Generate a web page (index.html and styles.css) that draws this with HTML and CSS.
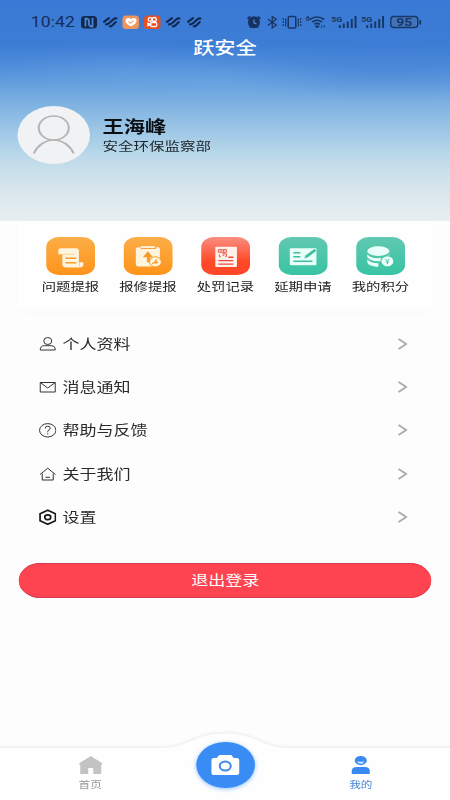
FILE: index.html
```html
<!DOCTYPE html>
<html lang="zh-CN">
<head>
<meta charset="utf-8">
<title>跃安全</title>
<link rel="stylesheet" href="styles.css">
</head>
<body>
<div class="screen">
  <header class="hero">
    <div class="status">
      <span class="time">10:42</span>
      <svg class="status-left" viewBox="80 12 122 20" preserveAspectRatio="none">
        <rect x="81" y="16" width="16" height="12.5" rx="3.5" fill="#12294f"/>
        <path d="M85.5 26.500V18.500q3 0 3.500 2v4q.5 2 3.500 2V18" fill="none" stroke="#4a86d4" stroke-width="1.800"/>
        <g id="swoosh" fill="none" stroke="#10284f" stroke-width="2.100" stroke-linecap="round">
          <path d="M104 21.800l5-3.600"/><path d="M106 24.300q1.500.200 3-1l4.500-4q1.500-1.300 3-.8"/><path d="M109.800 26.300q1.500.200 2.700-1l3.300-3.200"/>
        </g>
        <rect x="122.500" y="15.500" width="16.500" height="13.500" rx="3.500" fill="#f0965a"/>
        <path d="M131 26.500c-4-2-6-4-5.500-6.300.5-2.500 4-3 5.500-.8 1.500-2.200 5-1.700 5.500.8.5 2.300-1.500 4.300-5.500 6.300z" fill="#fff"/>
        <path d="M128.500 21.500l2 1.700 3-2.500" fill="none" stroke="#f0a070" stroke-width="1.100"/>
        <rect x="144" y="15.500" width="16.500" height="13.500" rx="3.500" fill="#e84f20"/>
        <g fill="none" stroke="#fff" stroke-width="1.300"><circle cx="150" cy="19.500" r="1.800"/><circle cx="154.300" cy="19.500" r="2"/><rect x="150.500" y="22.500" width="6.300" height="4" rx="1.500"/><path d="M148 23.300v2.400l2.500-1.200z"/></g>
        <use href="#swoosh" x="63"/><use href="#swoosh" x="84"/>
      </svg>
      <svg class="status-right" viewBox="246 12 176 20" preserveAspectRatio="none">
        <g fill="none" stroke="#183767" stroke-width="1.500">
          <circle cx="253.700" cy="22.300" r="5.300" fill="#14305c"/>
          <path d="M247.500 19l2.500-2.500M260 19l-2.500-2.500M249.500 27.500l1.500-1.500M258 27.500l-1.500-1.500" stroke-width="2"/>
          <path d="M253.700 19.500v3.300l2.500 1.200" stroke="#5b92da" stroke-width="1.200"/>
          <path d="M267.500 19l8.500 6-4 3V16.500l4 2.800-8.500 6.200" stroke-width="1.300"/>
          <rect x="288" y="16.500" width="7.500" height="11.500" rx="1"/>
          <path d="M285.500 18.500v8M298 18.500v8M283 18v2m0 1v2m0 1v2M300.500 18v2m0 1v2m0 1v2" stroke-width="1.200"/>
          <path d="M309.500 19.500q7-5 14.500 0M312 22q4.700-3.500 9.700 0M314.300 24.300q2.500-1.800 5.200 0" stroke-width="1.700"/>
          <path d="M315 26h4l-2 2zM321.500 25.500v2.500M324 25v2.500" fill="#183767" stroke-width="1"/>
          <path id="bars" d="M339.500 25v3M343.500 23.500v4.500M347.500 21.500v6.500M351.500 19v9M355.300 16v12" stroke-width="2"/>
          <use href="#bars" x="27.500"/>
          <rect x="390.500" y="16.500" width="27" height="11" rx="3" fill="#4174ba" stroke-width="1.400"/>
          <path d="M420 20v4.500" stroke-width="1.800"/>
        </g>
        <g class="status-text">
          <text x="305.500" y="21" font-size="7">6</text>
          <text x="331" y="21.800" font-size="7.500" textLength="11" lengthAdjust="spacingAndGlyphs">5G</text>
          <text x="361" y="21.800" font-size="7.500" textLength="11" lengthAdjust="spacingAndGlyphs">5G</text>
          <text x="396" y="26" font-size="11" textLength="16" lengthAdjust="spacingAndGlyphs">95</text>
        </g>
      </svg>
    </div>
    <h1 class="title">跃安全</h1>
    <div class="profile">
      <div class="avatar">
        <svg viewBox="0 0 58 58"><circle cx="29" cy="22" r="12"/><path d="M13 47.500c3-8 9-13.500 16-13.500s13 5.500 16 13.500"/></svg>
      </div>
      <div class="who"><div class="name">王海峰</div><div class="dept">安全环保监察部</div></div>
    </div>
  </header>

  <nav class="shortcuts">
    <a class="shortcut"><span class="tile orange">
      <svg viewBox="0 0 48 38" preserveAspectRatio="none"><path d="M14 11h16q2.500 0 2.500 3v11h4.500v2q0 3-3 3H19q-3 0-3-3V17h-4v-3q0-3 2-3z" fill="#fff4dd"/><path d="M16 17h12M33 29v-4" stroke="#ffd08a" fill="none"/><path d="M19 21h11M19 25.500h11" stroke="#fb9c2c" stroke-width="1.500"/></svg>
    </span><span class="label">问题提报</span></a>
    <a class="shortcut"><span class="tile orange">
      <svg viewBox="0 0 48 38" preserveAspectRatio="none"><rect x="12" y="10" width="24" height="19" rx="2" fill="#fff4dd"/><path d="M17 10.500h15" stroke="#fba037" stroke-width="2.500"/><rect x="17" y="9" width="14" height="1.800" fill="#fff4dd"/><path d="M24 14l5 6h-3v5h-3v-5h-4z" fill="#fb9a28"/><ellipse cx="31.500" cy="24.500" rx="6" ry="5" fill="#fff4dd" stroke="#fba033"/><path d="M28 26l3-2q0-2.500 2-2l-.5 2 2 1-2 1.500-2-.5-2 1z" fill="#fb9a28"/></svg>
    </span><span class="label">报修提报</span></a>
    <a class="shortcut"><span class="tile red">
      <svg viewBox="0 0 48 38" preserveAspectRatio="none"><rect x="14" y="9.500" width="21.500" height="20" rx="1" fill="#fff2ed"/><path d="M17 12.500h8v2.500h-8zM19.700 12.500v2.500M22.300 12.500v2.500M18 17v2.500h1.500M21 16.500h4v3h-1M21 18h2" fill="none" stroke="#e84a3b" stroke-width=".9"/><path d="M27 20h5M17 23.300h15M17 26.800h15" stroke="#ed4b38" stroke-width="1.300"/></svg>
    </span><span class="label">处罚记录</span></a>
    <a class="shortcut"><span class="tile green">
      <svg viewBox="0 0 48 38" preserveAspectRatio="none"><rect x="11" y="11" width="26.500" height="17" rx="1" fill="#eafff8"/><path d="M14.500 15.500h7M14.500 19.500h7M14.500 24h19" stroke="#3ebea3" stroke-width="1.400"/><path d="M25 21.500l1.500-3.500 9-6.500 2.500 2-9 6.700z" fill="#3ebea3" stroke="#eafff8" stroke-width=".5"/></svg>
    </span><span class="label">延期申请</span></a>
    <a class="shortcut"><span class="tile green">
      <svg viewBox="0 0 48 38" preserveAspectRatio="none"><g fill="#eafff8"><ellipse cx="22" cy="14" rx="11" ry="4.800"/><path d="M11 17q3 4 11 4t11-4v3q-3 4-11 4t-11-4zM11 22q3 4 11 4v3.500q-11-.5-11-5z"/><ellipse cx="31" cy="24" rx="6.500" ry="5.500" stroke="#43c4a9"/></g><path d="M29 21.500l2 2.300 2-2.300M31 23.800v3M29.500 24.800h3" fill="none" stroke="#3ebea3" stroke-width=".9"/></svg>
    </span><span class="label">我的积分</span></a>
  </nav>

  <ul class="menu">
    <li><svg class="ico" viewBox="0 0 18 16" preserveAspectRatio="none"><ellipse cx="9" cy="5" rx="4" ry="3.500"/><path d="M1.500 14q0-4.300 4-4.300h7q4 0 4 4.300z"/></svg><span>个人资料</span><svg class="chev" viewBox="0 0 8 12"><path d="M.8.800L7 6 .8 11.200"/></svg></li>
    <li><svg class="ico" viewBox="0 0 18 16" preserveAspectRatio="none"><path d="M1.500 3.500h15v9.500h-15zM1.500 3.500L9 9l7.500-5.500"/></svg><span>消息通知</span><svg class="chev" viewBox="0 0 8 12"><path d="M.8.800L7 6 .8 11.200"/></svg></li>
    <li><svg class="ico" viewBox="0 0 18 16" preserveAspectRatio="none"><ellipse cx="9" cy="8.300" rx="8.200" ry="6.700"/><path d="M6.500 6.500q0-2.300 2.500-2.300t2.500 2q0 1.200-1.300 1.800T9 9.500v.8M9 11.300v1.200"/></svg><span>帮助与反馈</span><svg class="chev" viewBox="0 0 8 12"><path d="M.8.800L7 6 .8 11.200"/></svg></li>
    <li><svg class="ico" viewBox="0 0 18 16" preserveAspectRatio="none"><path d="M1.300 8.500L9 2.200l7.700 6.300M3.500 7.500V14h11V7.500M6.800 11.300h4.400"/></svg><span>关于我们</span><svg class="chev" viewBox="0 0 8 12"><path d="M.8.800L7 6 .8 11.200"/></svg></li>
    <li><svg class="ico bold" viewBox="0 0 18 16" preserveAspectRatio="none"><path d="M9 1.300l7.700 3.500v7L9 15.300 1.300 11.800v-7z"/><ellipse cx="9" cy="8.300" rx="3" ry="2.400"/></svg><span>设置</span><svg class="chev" viewBox="0 0 8 12"><path d="M.8.800L7 6 .8 11.200"/></svg></li>
  </ul>

  <button class="logout">退出登录</button>

  <footer class="tabbar">
    <svg class="bar-shape" viewBox="0 0 450 72" preserveAspectRatio="none"><path d="M-4 20H160C190 20 192 5.500 225 5.500S260 20 290 20H454V76H-4Z"/></svg>
    <div class="tabs">
      <a class="tab"><svg viewBox="0 0 24 18" preserveAspectRatio="none"><path d="M12 0L24 7.500l-1.500 1.500V18H14.500V12h-5v6H1.500V9L0 7.500z" fill="#c3c3c3"/></svg><span>首页</span></a>
      <a class="shoot"><svg viewBox="0 0 28 20" preserveAspectRatio="none"><path d="M2.500 3H5.500L8 0h12l2.500 3h3Q28 3 28 5v13q0 2-2.500 2h-23Q0 20 0 18V5q0-2 2.500-2z" fill="#fff"/><ellipse cx="14" cy="11" rx="5.500" ry="4.500" fill="none" stroke="#3889ea" stroke-width="2"/></svg></a>
      <a class="tab active"><svg viewBox="0 0 24 18" preserveAspectRatio="none"><ellipse cx="12" cy="4.600" rx="6" ry="4.600" fill="#388af0"/><path d="M8.500 5.200q3.500 1.200 7 0-.5 2.500-3.500 2.500t-3.500-2.500z" fill="#d8eaff"/><path d="M3 18v-3q0-4 5-4h8q5 0 5 4v3z" fill="#388af0"/></svg><span>我的</span></a>
    </div>
  </footer>
</div>
</body>
</html>
```
FILE: styles.css
```css
* { box-sizing: border-box; margin: 0; padding: 0; }
body {
  width: 450px;
  height: 800px;
  overflow: hidden;
  background: #fdfdfd;
  font-family: Roboto, "Noto Sans CJK SC", sans-serif;
}
svg { display: block; flex: none; }

/* A 360-unit-wide layout, widened to fill the 450px viewport. */
.screen {
  width: 360px;
  height: 800px;
  display: flex;
  flex-direction: column;
  transform: scaleX(1.25);
  transform-origin: 0 0;
}

.hero {
  height: 221px;
  flex: none;
  background:
    radial-gradient(ellipse 90px 24px at 95px 68px, rgba(120,180,238,.18), transparent),
    radial-gradient(ellipse 100px 26px at 175px 80px, rgba(120,180,238,.2), transparent),
    radial-gradient(ellipse 130px 30px at 310px 72px, rgba(50,110,205,.22), transparent),
    linear-gradient(#3a7ad6 0, #3d7dd5 45px, #4f8dda 66px, #6aa3df 88px, #83b5e2 108px, #9dc6e6 130px, #b6d6e9 152px, #cce1ea 173px, #dae7ec 195px, #e8eef0 221px);
}
.status {
  height: 36px;
  padding: 12px 22.400px 0 24.600px;
  display: flex;
  align-items: flex-start;
}
.time { width: 39.400px; font-size: 14px; line-height: 21px; color: #152e59; letter-spacing: .1px; }
.status-left { width: 97.600px; height: 20px; }
.status-right { width: 140.800px; height: 20px; margin-left: auto; }
.status-text { fill: #183767; font-family: Roboto, sans-serif; font-weight: 700; }
.title {
  height: 24px;
  text-align: center;
  font-size: 17px;
  font-weight: 500;
  line-height: 24px;
  color: #fff;
}
.profile { display: flex; padding: 45.500px 0 0 14.400px; }
.avatar { width: 58px; height: 58px; border-radius: 50%; background: #f1f2f3; }
.avatar svg { width: 58px; height: 58px; fill: none; stroke: #b5b5b6; stroke-width: 1.700; }
.who { margin: 10.500px 0 0 9.600px; color: #0b0f14; }
.name { font-size: 17px; line-height: 22px; font-weight: 700; }
.dept { font-size: 12.400px; line-height: 18px; color: #20272d; }

.shortcuts {
  height: 90px;
  flex: none;
  margin: 0 14px;
  padding: 15.500px 11.400px 0;
  display: grid;
  grid-template-columns: repeat(5, 62px);
  background: #fefefe;
  border-radius: 0 0 8px 8px;
  box-shadow: 0 2px 5px rgba(0,0,0,.014);
}
.shortcut { display: flex; flex-direction: column; align-items: center; }
.tile { width: 38.600px; height: 38.500px; border-radius: 10px; overflow: hidden; }
.tile svg { width: 38.600px; height: 38.500px; }
.orange { background: linear-gradient(#fbae48, #ff931a); }
.red { background: linear-gradient(#f98e80, #ff4827 65%); }
.green { background: linear-gradient(#62c8b1, #37c4a4); }
.label { font-size: 11.500px; line-height: 16px; margin-top: 3.500px; color: #222; white-space: nowrap; }

.menu { list-style: none; flex: none; margin-top: 11px; padding: 0 34.500px 0 31px; }
.menu li { height: 43.300px; display: flex; align-items: center; font-size: 13.600px; color: #2a2a2a; }
.menu span { padding-bottom: 2px; }
.ico { width: 14.400px; height: 16px; margin-right: 4.600px; fill: none; stroke: #333; stroke-width: 1; }
.ico.bold { stroke: #181818; stroke-width: 1.700; }
.chev { width: 8px; height: 12px; margin-left: auto; fill: none; stroke: #adadad; stroke-width: 1.700; }

.logout {
  width: 330px;
  height: 35px;
  flex: none;
  margin: 25px 0 0 15.200px;
  border: 0;
  border-radius: 17.500px;
  background: #fe4450;
  box-shadow: inset 0 1px #d83b4d, inset 0 -1px #d83b4d;
  color: #fff;
  font: 13.600px/33px Roboto, "Noto Sans CJK SC", sans-serif;
}

.tabbar { margin-top: auto; height: 72px; display: grid; }
.bar-shape, .tabs { grid-area: 1 / 1; }
.bar-shape { width: 360px; height: 72px; overflow: visible; fill: #fefefe; filter: drop-shadow(0 -1px 1.500px rgba(0,0,0,.08)); }
.tabs { z-index: 1; display: grid; grid-template-columns: 144.400px 72px 143.600px; }
.tab { padding-top: 28px; display: flex; flex-direction: column; align-items: center; font-size: 9.300px; line-height: 14px; color: #999; }
.tab svg { width: 19.200px; height: 18px; margin-bottom: 4px; }
.tab.active { padding-left: 1px; color: #4a86d3; }
.shoot {
  width: 46.400px;
  height: 46px;
  margin: 14px auto 0;
  border-radius: 50%;
  background: #398cf3;
  box-shadow: 0 1px 4px rgba(57,140,243,.55);
  display: flex;
  align-items: center;
  justify-content: center;
}
.shoot svg { width: 22.400px; height: 20px; }
```
